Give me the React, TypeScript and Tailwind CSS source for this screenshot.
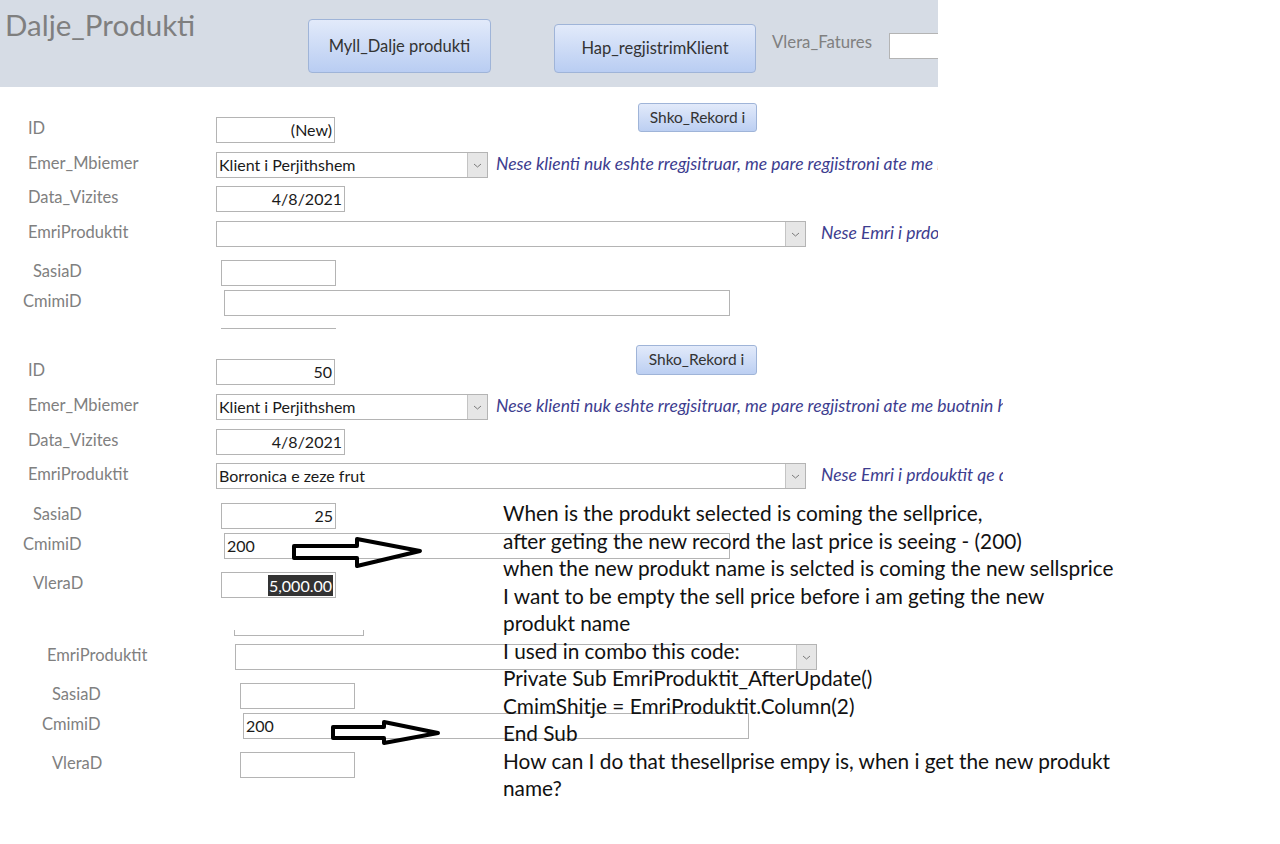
import { ReactNode } from "react";

const font = { fontFamily: "Lato, 'Open Sans', sans-serif" };

const Chevron = () => (
    <svg width="9" height="5" viewBox="0 0 9 5" fill="none">
        <path d="M1 1l3.5 3L8 1" stroke="#7a7a7a" strokeWidth="1" />
    </svg>
);

type BoxProps = {
    className: string
    children?: ReactNode
}

// plain access text box
const Box = (props: BoxProps) => (
    <div className={"flex h-[26px] shrink-0 items-center border border-[#b4b4b4] bg-white px-[2px] text-[16px] text-[#1a1a1a] " + props.className}>
        {props.children}
    </div>
);

type ComboProps = {
    className: string
    value?: string
}

const Combo = (props: ComboProps) => (
    <div className={"flex h-[26px] shrink-0 items-center border border-[#b4b4b4] bg-white text-[16px] text-[#1a1a1a] " + props.className}>
        <span className="flex-1 whitespace-nowrap pl-[2px]">{props.value}</span>
        <span className="flex h-full w-[20px] items-center justify-center border-l border-[#c4c4c4] bg-[#e6e6e6]">
            <Chevron />
        </span>
    </div>
);

const Label = ({ className, children }: { className: string, children: ReactNode }) => (
    <span className={"shrink-0 pb-[3px] text-[16.5px] text-[#808080] " + className}>{children}</span>
);

const Note = ({ className, children }: { className: string, children: ReactNode }) => (
    <span className={"shrink-0 whitespace-nowrap pb-[2px] text-[17.5px] italic text-[#3d3d8f] " + className}>{children}</span>
);

const RekordButton = ({ className }: { className: string }) => (
    <button className={"shrink-0 self-start rounded-[3px] border border-[#9fb4d8] bg-gradient-to-b from-[#e2eafa] to-[#bccff2] text-[15.5px] text-[#333] " + className}>
        Shko_Rekord i
    </button>
);

const noteKlient = "Nese klienti nuk eshte rregjsitruar, me pare regjistroni ate me buotnin hap_regjistrimKlient";
const noteProdukt = "Nese Emri i prdouktit qe doni nuk gjendet ne liste";

const annotation = [
    "When is the produkt selected is coming the sellprice,",
    "after geting the new record the last price is seeing - (200)",
    "when the new produkt name is selcted is coming the new sellsprice",
    "I want to be empty the sell price before i am geting the new",
    "produkt name",
    "I used in combo this code:",
    "Private Sub EmriProduktit_AfterUpdate()",
    "CmimShitje = EmriProduktit.Column(2)",
    "End Sub",
    "How can I do that thesellprise empy is, when i get the new produkt",
    "name?",
];

export default function App() {
    return (
        <div style={font} className="relative h-[844px] w-[1280px] overflow-hidden bg-white">
            {/* header */}
            <div className="flex h-[87px] w-[938px] items-start overflow-hidden bg-[#d6dce5]">
                <div className="w-[308px] shrink-0 pl-[5px] pt-[6px] text-[29.5px] leading-[38px] text-[#7f7f7f]">Dalje_Produkti</div>
                <button className="mt-[19px] h-[54px] w-[183px] shrink-0 rounded-[4px] border border-[#9fb4d8] bg-gradient-to-b from-[#e2eafa] to-[#b9cdf2] text-[16.5px] text-[#333]">
                    Myll_Dalje produkti
                </button>
                <button className="ml-[63px] mt-[24px] h-[49px] w-[202px] shrink-0 rounded-[4px] border border-[#9fb4d8] bg-gradient-to-b from-[#e2eafa] to-[#b9cdf2] text-[16.5px] text-[#333]">
                    Hap_regjistrimKlient
                </button>
                <span className="ml-[16px] mt-[29px] w-[117px] shrink-0 text-[16.8px] text-[#808080]">Vlera_Fatures</span>
                <div className="mt-[33px] h-[26px] w-[60px] shrink-0 border border-[#b4b4b4] bg-white"></div>
            </div>

            {/* record 1 */}
            <div className="flex w-[938px] flex-col overflow-hidden">
                <div className="mt-[30px] flex h-[26px] items-center">
                    <Label className="w-[216px] pl-[28px]">ID</Label>
                    <Box className="w-[119px] justify-end">(New)</Box>
                    <RekordButton className="-mt-[14px] ml-[303px] h-[29px] w-[119px]" />
                </div>
                <div className="mt-[9px] flex h-[26px] items-center">
                    <Label className="w-[216px] pl-[28px]">Emer_Mbiemer</Label>
                    <Combo className="w-[272px]" value="Klient i Perjithshem" />
                    <Note className="ml-[8px]">{noteKlient}</Note>
                </div>
                <div className="mt-[8px] flex h-[26px] items-center">
                    <Label className="w-[216px] pl-[28px]">Data_Vizites</Label>
                    <Box className="w-[129px] justify-end">4/8/2021</Box>
                </div>
                <div className="mt-[9px] flex h-[26px] items-center">
                    <Label className="w-[216px] pl-[28px]">EmriProduktit</Label>
                    <Combo className="w-[590px]" />
                    <Note className="ml-[15px]">{noteProdukt}</Note>
                </div>
                <div className="mt-[13px] flex h-[26px] items-center">
                    <Label className="w-[221px] pl-[33px]">SasiaD</Label>
                    <Box className="w-[115px]" />
                </div>
                <div className="mt-[4px] flex h-[26px] items-center">
                    <Label className="w-[224px] pl-[23px]">CmimiD</Label>
                    <Box className="w-[506px]" />
                </div>
                <div className="ml-[221px] mt-[12px] h-px w-[115px] bg-[#b4b4b4]"></div>
            </div>

            {/* record 2 */}
            <div className="flex w-[1003px] flex-col overflow-hidden">
                <div className="mt-[30px] flex h-[26px] items-center">
                    <Label className="w-[216px] pl-[28px]">ID</Label>
                    <Box className="w-[119px] justify-end">50</Box>
                    <RekordButton className="-mt-[14px] ml-[301px] h-[30px] w-[121px]" />
                </div>
                <div className="mt-[9px] flex h-[26px] items-center">
                    <Label className="w-[216px] pl-[28px]">Emer_Mbiemer</Label>
                    <Combo className="w-[272px]" value="Klient i Perjithshem" />
                    <Note className="ml-[8px]">{noteKlient}</Note>
                </div>
                <div className="mt-[9px] flex h-[26px] items-center">
                    <Label className="w-[216px] pl-[28px]">Data_Vizites</Label>
                    <Box className="w-[129px] justify-end">4/8/2021</Box>
                </div>
                <div className="mt-[8px] flex h-[26px] items-center">
                    <Label className="w-[216px] pl-[28px]">EmriProduktit</Label>
                    <Combo className="w-[590px]" value="Borronica e zeze frut" />
                    <Note className="ml-[15px]">{noteProdukt}</Note>
                </div>
                <div className="mt-[14px] flex h-[26px] items-center">
                    <Label className="w-[221px] pl-[33px]">SasiaD</Label>
                    <Box className="w-[115px] justify-end">25</Box>
                </div>
                <div className="mt-[4px] flex h-[26px] items-center">
                    <Label className="w-[224px] pl-[23px]">CmimiD</Label>
                    <Box className="w-[506px]">200</Box>
                </div>
                <div className="mt-[13px] flex h-[26px] items-center">
                    <Label className="w-[221px] pl-[33px]">VleraD</Label>
                    <Box className="w-[115px] justify-end">
                        <span className="bg-[#333] px-px leading-[21px] text-white">5,000.00</span>
                    </Box>
                </div>
            </div>

            {/* record 3, partly hidden */}
            <div className="flex flex-col">
                <div className="ml-[234px] mt-[32px] h-[6px] w-[130px] border-x border-b border-[#b4b4b4]"></div>
                <div className="mt-[8px] flex h-[26px] items-center">
                    <Label className="w-[235px] pl-[47px]">EmriProduktit</Label>
                    <Combo className="w-[582px]" />
                </div>
                <div className="mt-[13px] flex h-[26px] items-center">
                    <Label className="w-[240px] pl-[52px]">SasiaD</Label>
                    <Box className="w-[115px]" />
                </div>
                <div className="mt-[4px] flex h-[26px] items-center">
                    <Label className="w-[243px] pl-[42px]">CmimiD</Label>
                    <Box className="w-[506px]">200</Box>
                </div>
                <div className="mt-[13px] flex h-[26px] items-center">
                    <Label className="w-[240px] pl-[52px]">VleraD</Label>
                    <Box className="w-[115px]" />
                </div>
            </div>

            {/* hand drawn arrows */}
            <svg className="pointer-events-none absolute left-0 top-0" width="1280" height="844">
                <polygon points="294,546 357,546 357,539 420,551 357,566 357,558 294,558" fill="none" stroke="#000" strokeWidth="4" strokeLinejoin="round" />
                <polygon points="333,727 384,727 384,722 438,733 384,743 384,738 333,738" fill="none" stroke="#000" strokeWidth="4" strokeLinejoin="round" />
            </svg>

            {/* question text pasted over the form */}
            <div className="absolute left-[503px] top-[499px] whitespace-nowrap text-[20.8px] leading-[27.5px] text-[#111]">
                {annotation.map((line, i) => (
                    <div key={i}>{line}</div>
                ))}
            </div>
        </div>
    );
}
